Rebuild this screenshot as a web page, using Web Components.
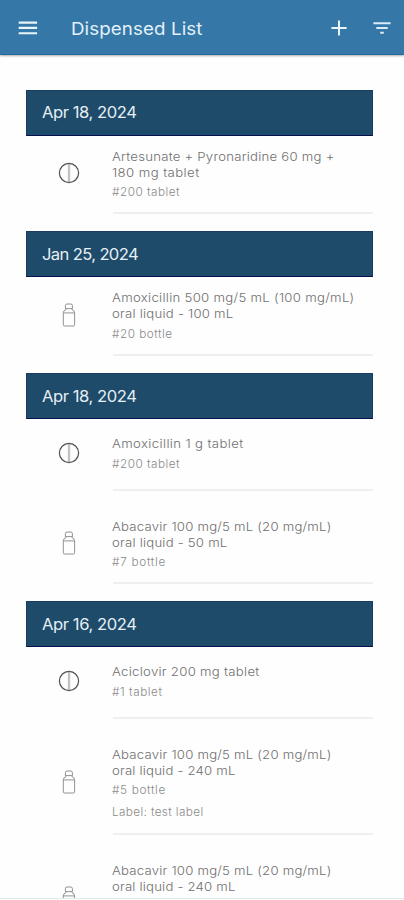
<!DOCTYPE html>
<html lang="en">
<head>
<meta charset="utf-8">
<title>Dispensed List</title>
<style>
html,body{margin:0;background:#fefefe}
body{height:900px;overflow:hidden;font-family:Inter,"Open Sans",sans-serif}
</style>
</head>
<body>
<dispensed-screen>
  <app-bar slot="bar"><fit-line width="131">Dispensed List</fit-line></app-bar>
  <date-group>
    <fit-line slot="date" width="94">Apr 18, 2024</fit-line>
    <dispense-item kind="tablet" style="--top:13px;--h:78.6px">
      <fit-line slot="name" width="222">Artesunate + Pyronaridine 60 mg +</fit-line>
      <fit-line slot="name" width="87">180 mg tablet</fit-line>
      <fit-line slot="info" width="67.5">#200 tablet</fit-line>
    </dispense-item>
  </date-group>
  <date-group>
    <fit-line slot="date" width="95.5">Jan 25, 2024</fit-line>
    <dispense-item kind="bottle" style="--top:13px;--h:79px">
      <fit-line slot="name" width="242">Amoxicillin 500 mg/5 mL (100 mg/mL)</fit-line>
      <fit-line slot="name" width="121">oral liquid - 100 mL</fit-line>
      <fit-line slot="info" width="60">#20 bottle</fit-line>
    </dispense-item>
  </date-group>
  <date-group>
    <fit-line slot="date" width="94">Apr 18, 2024</fit-line>
    <dispense-item kind="tablet" style="--top:17px;--h:71.5px">
      <fit-line slot="name" width="131">Amoxicillin 1 g tablet</fit-line>
      <fit-line slot="info" width="67.5">#200 tablet</fit-line>
    </dispense-item>
    <dispense-item kind="bottle" style="--top:28px;--h:93.5px">
      <fit-line slot="name" width="219">Abacavir 100 mg/5 mL (20 mg/mL)</fit-line>
      <fit-line slot="name" width="115">oral liquid - 50 mL</fit-line>
      <fit-line slot="info" width="53.5">#7 bottle</fit-line>
    </dispense-item>
  </date-group>
  <date-group>
    <fit-line slot="date" width="94">Apr 16, 2024</fit-line>
    <dispense-item kind="tablet" style="--top:17px;--h:71.5px">
      <fit-line slot="name" width="147">Aciclovir 200 mg tablet</fit-line>
      <fit-line slot="info" width="50">#1 tablet</fit-line>
    </dispense-item>
    <dispense-item kind="bottle" style="--top:28px;--h:116px">
      <fit-line slot="name" width="219">Abacavir 100 mg/5 mL (20 mg/mL)</fit-line>
      <fit-line slot="name" width="123">oral liquid - 240 mL</fit-line>
      <fit-line slot="info" width="53.5">#5 bottle</fit-line>
      <fit-line slot="info" width="91">Label: test label</fit-line>
    </dispense-item>
    <dispense-item kind="bottle" style="--top:28px;--h:116px;--min:73px">
      <fit-line slot="name" width="219">Abacavir 100 mg/5 mL (20 mg/mL)</fit-line>
      <fit-line slot="name" width="123">oral liquid - 240 mL</fit-line>
    </dispense-item>
  </date-group>
</dispensed-screen>
<script>
// A single line of slightly widened text whose tracking is adjusted to span a given width.
customElements.define('fit-line', class extends HTMLElement {
  connectedCallback() {
    this.attachShadow({mode: 'open'}).innerHTML =
      '<style>:host{display:block;white-space:nowrap}span{display:inline-block;transform:scaleX(1.07);transform-origin:0 50%}</style><span><slot></slot></span>';
  }
  fit() {
    const span = this.shadowRoot.querySelector('span');
    const n = this.textContent.length;
    const gap = (+this.getAttribute('width') + .5 - span.getBoundingClientRect().width) / n / 1.07;
    span.style.letterSpacing = gap.toFixed(3) + 'px';
  }
});

customElements.define('app-icon', class extends HTMLElement {
  connectedCallback() {
    const art = {
      menu: '<svg width="20" height="14" viewBox="0 0 20 14"><path d="M.7 1.6h18.4M.7 6.9h18.4M.7 12.2h18.4" stroke="#e9f5fc" stroke-width="2.1"/></svg>',
      plus: '<svg width="16" height="16" viewBox="0 0 16 16"><path d="M8 .4v15.2M.4 8h15.2" stroke="#e9f5fc" stroke-width="2"/></svg>',
      filter: '<svg width="18" height="12" viewBox="0 0 18 12"><path d="M.4 1.3h17.2M3.3 6h11.4M7.2 10.8h3.6" stroke="#d9ebf6" stroke-width="2"/></svg>',
      tablet: '<svg width="22" height="22" viewBox="0 0 22 22" fill="none"><circle cx="11" cy="11" r="9.6" stroke="#505050" stroke-width="1.2"/><path d="M10.4 1.8v18.4M11.7 1.8v18.4" stroke="#888" stroke-width=".6"/></svg>',
      bottle: '<svg width="14" height="24" viewBox="0 0 14 24" fill="none" stroke="#868686" stroke-width=".9"><path d="M3.4 5.6V2.6q0-1.6 1.6-1.6h3.8q1.6 0 1.6 1.6v3zM3.8 5.6v1.2Q1.3 7.6 1.3 9.6v12.2q0 1.2 1.2 1.2h8.9q1.2 0 1.2-1.2V9.6q0-2-2.5-2.8V5.6M1.3 9.9h11.3"/></svg>'
    };
    this.attachShadow({mode: 'open'}).innerHTML =
      '<style>:host{display:block}svg{display:block}</style>' + art[this.getAttribute('name')];
  }
});

customElements.define('app-bar', class extends HTMLElement {
  connectedCallback() {
    this.attachShadow({mode: 'open'}).innerHTML = `<style>
      :host{display:flex;align-items:center;box-sizing:border-box;height:55px;padding:2px 13.5px 0 18px;
        background:#3577a7;border-bottom:1px solid #216ba1;box-shadow:0 1px 2px #0005;color:#e3f1fa;font-size:17.5px}
      .title{flex:1;margin-left:33px}
      .add{margin-right:25.5px}
    </style><app-icon name="menu"></app-icon><div class="title"><slot></slot></div>
    <app-icon class="add" name="plus"></app-icon><app-icon name="filter"></app-icon>`;
  }
});

customElements.define('date-group', class extends HTMLElement {
  connectedCallback() {
    this.attachShadow({mode: 'open'}).innerHTML = `<style>
      :host{display:block}
      header{display:flex;align-items:center;box-sizing:border-box;height:46px;padding-left:14.5px;
        background:#1e4b69;border:1px solid #173e60;border-bottom-color:#06104e;color:#e6eff5;font-size:15.5px}
    </style><header><slot name="date"></slot></header><slot></slot>`;
  }
});

customElements.define('dispense-item', class extends HTMLElement {
  connectedCallback() {
    this.attachShadow({mode: 'open'}).innerHTML = `<style>
      :host{display:grid;grid-template-columns:86.5px 1fr;height:var(--h)}
      .icon{display:grid;place-items:center;height:var(--icon-h);padding-top:var(--top)}
      .body{box-sizing:border-box;height:100%;padding-top:var(--top);border-bottom:2px solid #efefef}
      .text{min-height:var(--min,0);margin-left:-.5px}
      .name{font-size:12.3px;line-height:16px;color:#707070;font-weight:300}
      .info{display:grid;gap:5.5px;margin-top:3.5px;font-size:11px;line-height:16px;color:#8b8b8b;font-weight:300}
    </style><div class="icon"><app-icon name="${this.getAttribute('kind')}"></app-icon></div>
    <div class="body"><div class="text"><div class="name"><slot name="name"></slot></div>
    <div class="info"><slot name="info"></slot></div></div></div>`;
    const h = this.shadowRoot.querySelector('.text').getBoundingClientRect().height;
    this.style.setProperty('--icon-h', (h - 2.5) + 'px');
  }
});

customElements.define('dispensed-screen', class extends HTMLElement {
  connectedCallback() {
    this.attachShadow({mode: 'open'}).innerHTML = `<style>
      :host{display:flex;flex-direction:column;box-sizing:border-box;width:404px;height:899px;overflow:hidden;border-bottom:1px solid #e3e8ed}
      main{display:grid;align-content:start;gap:17px;padding:34.5px 31px 0 26px;flex:1;min-height:0;overflow:hidden}
    </style><slot name="bar"></slot><main><slot></slot></main>`;
  }
});

document.querySelectorAll('fit-line').forEach(line => line.fit());
</script>
</body>
</html>
